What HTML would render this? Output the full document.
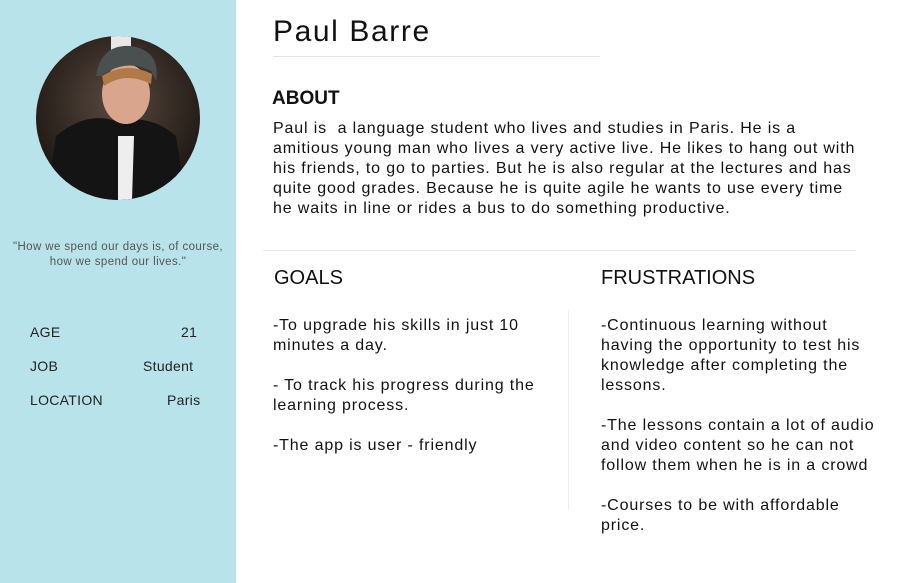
<!DOCTYPE html>
<html><head><meta charset="utf-8"><style>
body{margin:0;width:899px;height:583px;background:#fff;position:relative;overflow:hidden;font-family:"Liberation Sans",sans-serif;color:#111}
.a{position:absolute;white-space:nowrap}
.side{position:absolute;left:0;top:0;width:236px;height:583px;background:#b9e3ea}
.t{font-size:16px;letter-spacing:0.85px}
.s{font-size:14px;letter-spacing:0.3px;color:#222}
</style></head><body>
<div class="side"></div>
<svg class="a" style="left:36px;top:36px" width="164" height="164" viewBox="0 0 164 164">
<defs><clipPath id="c"><circle cx="82" cy="82" r="82"/></clipPath>
<radialGradient id="g" cx="0.5" cy="0.4" r="0.6"><stop offset="0" stop-color="#5a4a40"/><stop offset="1" stop-color="#1c1612"/></radialGradient></defs>
<g clip-path="url(#c)">
<rect width="164" height="164" fill="url(#g)"/>
<rect x="75" y="0" width="20" height="14" fill="#e8e8e8"/>
<path d="M10 164 L20 100 Q50 75 80 85 Q115 78 140 100 L150 164Z" fill="#141414"/>
<path d="M82 100 L98 100 L96 164 L82 164Z" fill="#eee"/>
<ellipse cx="90" cy="58" rx="24" ry="30" fill="#d9a58c"/>
<path d="M60 40 Q65 8 95 10 Q125 15 120 45 L115 35 Q90 22 65 40Z" fill="#4a5050"/>
<path d="M66 40 Q90 25 116 38 L115 48 Q90 35 68 50Z" fill="#b07a48"/>
</g></svg>
<div class="a" style="left:0;width:236px;top:240px;text-align:center;font-size:11.5px;letter-spacing:0.4px;line-height:15px;color:#555;white-space:normal">"How we spend our days is, of course,<br>how we spend our lives."</div>
<div class="a s" style="left:30px;top:324px">AGE</div><div class="a s" style="left:181px;top:324px">21</div>
<div class="a s" style="left:30px;top:358px">JOB</div><div class="a s" style="left:143px;top:358px">Student</div>
<div class="a s" style="left:30px;top:392px">LOCATION</div><div class="a s" style="left:167px;top:392px">Paris</div>

<div class="a" style="left:273px;top:15px;font-size:30px;letter-spacing:1.6px">Paul Barre</div>
<div class="a" style="left:273px;top:56px;width:327px;height:1px;background:#e4e4e4"></div>
<div class="a" style="left:272px;top:88px;font-size:19px;font-weight:bold">ABOUT</div>
<div class="a t" style="left:273px;top:120px">Paul is&nbsp; a language student who lives and studies in Paris. He is a</div>
<div class="a t" style="left:273px;top:140px">amitious young man who lives a very active live. He likes to hang out with</div>
<div class="a t" style="left:273px;top:160px">his friends, to go to parties. But he is also regular at the lectures and has</div>
<div class="a t" style="left:273px;top:180px">quite good grades. Because he is quite agile he wants to use every time</div>
<div class="a t" style="left:273px;top:200px">he waits in line or rides a bus to do something productive.</div>
<div class="a" style="left:263px;top:250px;width:593px;height:1px;background:#e8e8e8"></div>
<div class="a" style="left:274px;top:267px;font-size:20px">GOALS</div>
<div class="a" style="left:601px;top:267px;font-size:20px">FRUSTRATIONS</div>
<div class="a" style="left:568px;top:310px;width:1px;height:200px;background:#eee"></div>
<div class="a t" style="left:273px;top:317px">-To upgrade his skills in just 10</div>
<div class="a t" style="left:273px;top:337px">minutes a day.</div>
<div class="a t" style="left:273px;top:377px">- To track his progress during the</div>
<div class="a t" style="left:273px;top:397px">learning process.</div>
<div class="a t" style="left:273px;top:437px">-The app is user - friendly</div>
<div class="a t" style="left:601px;top:317px">-Continuous learning without</div>
<div class="a t" style="left:601px;top:337px">having the opportunity to test his</div>
<div class="a t" style="left:601px;top:357px">knowledge after completing the</div>
<div class="a t" style="left:601px;top:377px">lessons.</div>
<div class="a t" style="left:601px;top:417px">-The lessons contain a lot of audio</div>
<div class="a t" style="left:601px;top:437px">and video content so he can not</div>
<div class="a t" style="left:601px;top:457px">follow them when he is in a crowd</div>
<div class="a t" style="left:601px;top:497px">-Courses to be with affordable</div>
<div class="a t" style="left:601px;top:517px">price.</div>
</body></html>
